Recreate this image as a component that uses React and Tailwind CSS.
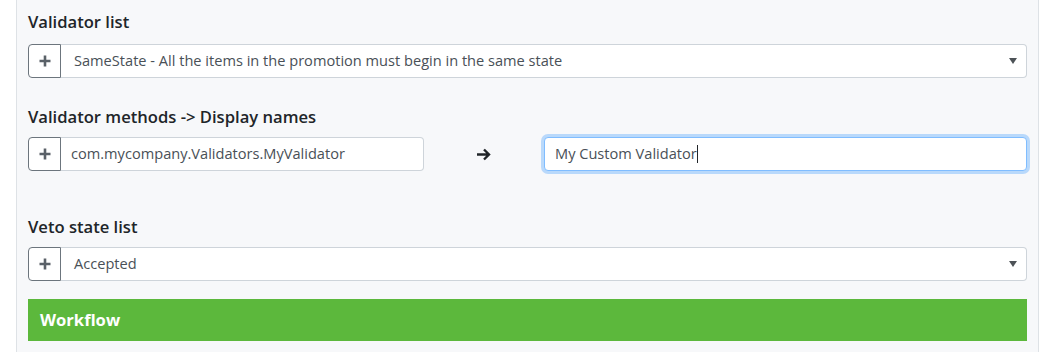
const font = { fontFamily: '"Segoe UI", "Open Sans", "Noto Sans", sans-serif' }

function PlusButton() {
  return (
    <div className="w-[33px] h-full flex items-center justify-center border border-[#6c757d] rounded-l-[4px] bg-white shrink-0">
      <svg width="14" height="14" viewBox="0 0 14 14">
        <path d="M7 1.5v11M1.5 7h11" stroke="#5a6168" strokeWidth="2.6" />
      </svg>
    </div>
  )
}

function SelectRow({ value }) {
  return (
    <div className="flex h-[34px]">
      <PlusButton />
      <div className="flex-1 flex items-center justify-between bg-white border border-l-0 border-[#ced4da] rounded-r-[4px] pl-[13px] pr-[9px]">
        <span className="text-[14.6px] text-[#495057]">{value}</span>
        <svg width="8" height="6" viewBox="0 0 8 6">
          <path d="M0 0h8L4 6z" fill="#4d5257" />
        </svg>
      </div>
    </div>
  )
}

function Heading({ children }) {
  return <div className="text-[16.6px] font-semibold text-[#212529] leading-[20px]">{children}</div>
}

export default function App() {
  return (
    <div className="w-[1056px] h-[352px] bg-white overflow-hidden" style={font}>
      <div className="ml-4 w-[1023px] h-full bg-[#f7f8fa] border-x border-[#dee2e6] px-[11px]">
        <div className="pt-[12px]">
          <Heading>Validator list</Heading>
        </div>
        <div className="mt-[12px]">
          <SelectRow value="SameState - All the items in the promotion must begin in the same state" />
        </div>

        <div className="mt-[29px]">
          <Heading>Validator methods -&gt; Display names</Heading>
        </div>
        <div className="mt-[10px] flex items-center h-[34px]">
          <div className="flex h-[34px] w-[396px]">
            <PlusButton />
            <div className="flex-1 flex items-center bg-white border border-l-0 border-[#ced4da] rounded-r-[4px] pl-[10px]">
              <span className="text-[14.6px] text-[#495057]">com.mycompany.Validators.MyValidator</span>
            </div>
          </div>
          <div className="w-[120px] flex items-center justify-center">
            <svg width="16" height="13" viewBox="0 0 16 13">
              <path d="M1 6.5h12M8 1.5l5 5-5 5" stroke="#212529" strokeWidth="2.4" fill="none" />
            </svg>
          </div>
          <div className="flex-1 h-[34px] flex items-center bg-white border border-[#80bdff] rounded-[4px] pl-[10px] shadow-[0_0_0_3px_rgba(0,123,255,0.25)]">
            <span className="text-[14.6px] text-[#495057]">My Custom Validator</span>
            <span className="w-px h-[18px] bg-[#212529]" />
          </div>
        </div>

        <div className="mt-[46px]">
          <Heading>Veto state list</Heading>
        </div>
        <div className="mt-[10px]">
          <SelectRow value="Accepted" />
        </div>

        <div className="mt-[18px] h-[42px] bg-[#5cb83c] flex items-center pl-[12px]">
          <span className="text-[16.6px] font-bold text-white">Workflow</span>
        </div>
      </div>
    </div>
  )
}
